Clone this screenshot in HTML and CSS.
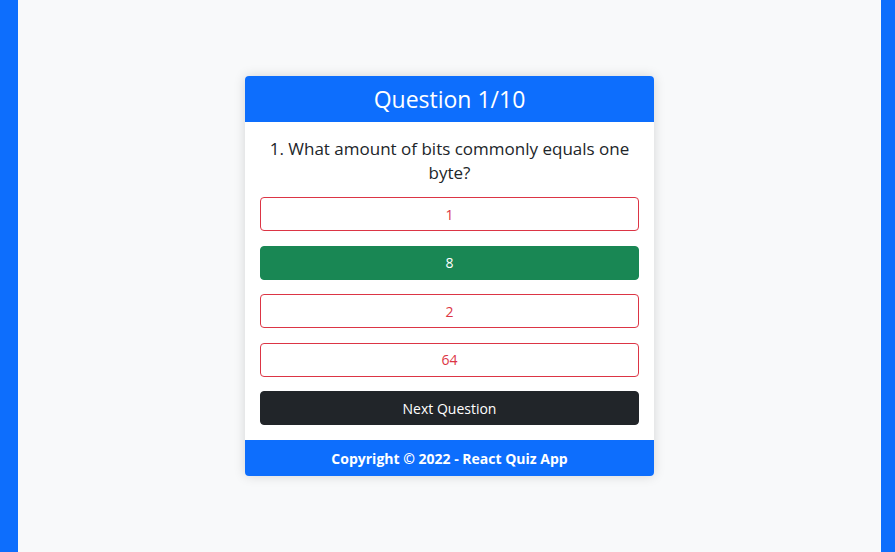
FILE: index.html
```html
<!DOCTYPE html>
<html lang="en">
<head>
<meta charset="utf-8">
<title>React Quiz App</title>
<link rel="stylesheet" href="styles.css">
</head>
<body>
<div class="page">
  <div class="side side-left"></div>
  <main class="main">
    <div class="card">
      <div class="card-header">Question 1/10</div>
      <div class="card-body">
        <p class="question">1. What amount of bits commonly equals one byte?</p>
        <button class="btn btn-outline-danger">1</button>
        <button class="btn btn-success">8</button>
        <button class="btn btn-outline-danger">2</button>
        <button class="btn btn-outline-danger">64</button>
        <button class="btn btn-dark">Next Question</button>
      </div>
      <div class="card-footer">Copyright © 2022 - React Quiz App</div>
    </div>
  </main>
  <div class="side side-right"></div>
</div>
</body>
</html>
```

FILE: styles.css
```css
* { box-sizing: border-box; }
html, body { margin: 0; height: 100%; }
body {
  font-family: "Open Sans", "Noto Sans", sans-serif;
  color: #212529;
  background: #f8f9fa;
}
.page {
  display: flex;
  height: 552px;
}
.side { background: #0d6efd; }
.side-left { width: 18px; }
.side-right { width: 14px; }
.main {
  flex: 1;
  display: flex;
  align-items: center;
  justify-content: center;
  background: #f8f9fa;
}
.card {
  width: 409px;
  height: 400px;
  display: flex;
  flex-direction: column;
  background: #fff;
  border-radius: 4px;
  overflow: hidden;
  box-shadow: 0 0 12px rgba(0,0,0,0.15);
}
.card-header {
  height: 46px;
  background: #0d6efd;
  color: #fff;
  font-size: 23px;
  line-height: 46px;
  text-align: center;
}
.card-body {
  flex: 1;
  padding: 15px 15px 0;
  display: flex;
  flex-direction: column;
}
.question {
  margin: 0 0 12px;
  font-size: 17px;
  line-height: 24px;
  text-align: center;
}
.btn {
  display: block;
  width: 100%;
  height: 34px;
  margin: 0 0 14.5px;
  border-radius: 4px;
  font-family: inherit;
  font-size: 14px;
  text-align: center;
  cursor: pointer;
}
.btn-outline-danger { background: #fff; color: #dc3545; border: 1px solid #dc3545; }
.btn-success { background: #198754; color: #fff; border: 1px solid #198754; }
.btn-dark { background: #212529; color: #fff; border: 1px solid #212529; }
.card-footer {
  height: 37px;
  background: #0d6efd;
  color: #fff;
  font-weight: 700;
  font-size: 14px;
  line-height: 37px;
  text-align: center;
}
```
